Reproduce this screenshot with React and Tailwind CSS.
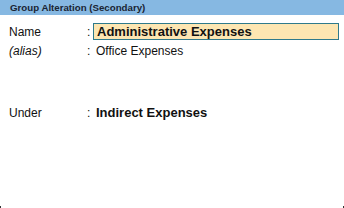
export default function App() {
  return (
    <div className="w-[344px] h-[208px] bg-white relative overflow-hidden" style={{ fontFamily: '"Liberation Sans", Arial, sans-serif' }}>
      <div className="h-[15px] bg-[#86b8e2] flex items-center pl-[10px] text-[9.7px] font-bold text-[#1a2433] leading-none">
        Group Alteration (Secondary)
      </div>
      <div className="pt-[8px] pl-[9px] text-[12px] text-[#111] leading-none">
        <div className="flex items-center h-[17px]">
          <div className="w-[78px]">Name</div>
          <div className="w-[6px]">:</div>
          <div className="w-[246px] h-[17px] border border-[#2f7a8c] bg-[#fde6b2] flex items-center pl-[3px] font-bold text-[13px]">
            Administrative Expenses
          </div>
        </div>
        <div className="flex items-center h-[17px] mt-[2px]">
          <div className="w-[78px] italic">(alias)</div>
          <div className="w-[9px]">:</div>
          <div>Office Expenses</div>
        </div>
        <div className="flex items-center h-[17px] mt-[45px]">
          <div className="w-[78px]">Under</div>
          <div className="w-[9px]">:</div>
          <div className="font-bold text-[13px]">Indirect Expenses</div>
        </div>
      </div>
      <div className="absolute left-0 bottom-0 w-[1px] h-[2px] bg-[#333]" />
      <div className="absolute right-0 bottom-0 w-[1px] h-[2px] bg-[#333]" />
    </div>
  );
}
